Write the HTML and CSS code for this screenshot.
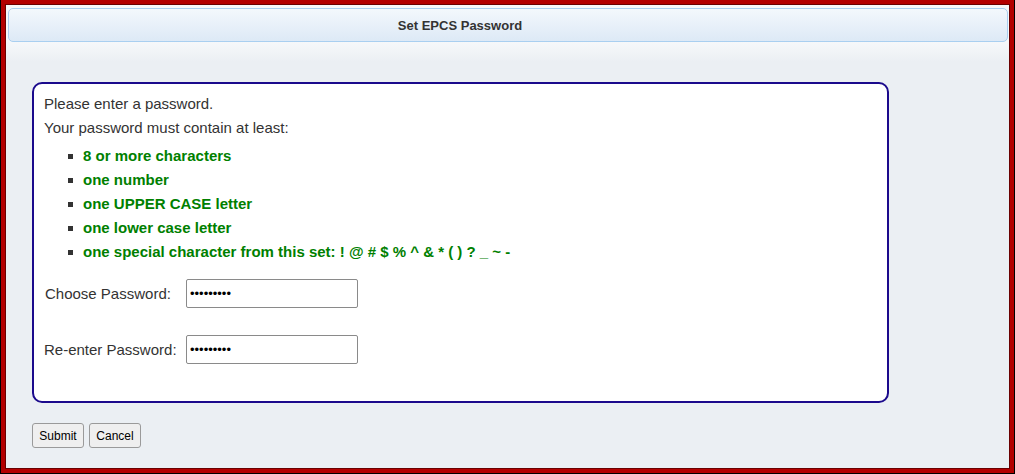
FILE: index.html
```html
<!DOCTYPE html>
<html lang="en">
<head>
    <meta charset="UTF-8">
    <meta name="viewport" content="width=device-width, initial-scale=1.0">
    <title>Set EPCS Password</title>
    <link rel="stylesheet" href="styles.css">
</head>
<body>
    <div class="page">
        <div class="frame">
            <div class="header">
                <span class="title">Set EPCS Password</span>
            </div>
            <form class="password-form" onsubmit="return false;">
                <div class="panel">
                    <div class="intro">Please enter a password.</div>
                    <div class="intro">Your password must contain at least:</div>
                    <ul class="rules">
                        <li>8 or more characters</li>
                        <li>one number</li>
                        <li>one UPPER CASE letter</li>
                        <li>one lower case letter</li>
                        <li>one special character from this set: ! @ # $ % ^ &amp; * ( ) ? _ ~ -</li>
                    </ul>
                    <div class="field-row">
                        <label for="pwd1">Choose Password:</label>
                        <input type="password" id="pwd1" name="pwd1" value="secret123">
                    </div>
                    <div class="field-row">
                        <label class="label-tight" for="pwd2">Re-enter Password:</label>
                        <input type="password" id="pwd2" name="pwd2" value="secret123">
                    </div>
                </div>
                <div class="actions">
                    <button type="submit">Submit</button>
                    <button type="button">Cancel</button>
                </div>
            </form>
        </div>
    </div>
</body>
</html>
```

FILE: styles.css
```css
* {
    box-sizing: border-box;
}
body {
    margin: 0;
    font-family: "Liberation Sans", Arial, sans-serif;
    color: #333;
    background-color: #fff;
}
.page {
    width: 1015px;
    height: 474px;
    border: 1px solid #000;
    border-top: none;
}
.frame {
    height: 100%;
    border: 4px solid #b30000;
    box-shadow: inset 1px 1px 0 #6a0000, inset -1px -1px 0 #6a0000;
    padding: 4px 2px 0 3px;
    background: linear-gradient(to bottom, #f6f8fa 0, #f6f8fa 38px, #ebeff3 58px, #ebeff3 100%);
}
.header {
    height: 34px;
    border: 1px solid #a9cff0;
    border-radius: 5px;
    background: linear-gradient(to bottom, #f3f8fc 0%, #dde9f6 100%);
    display: flex;
    align-items: center;
    justify-content: center;
    padding-right: 96px;
}
.title {
    font-size: 13px;
    font-weight: bold;
    color: #333;
}
.password-form {
    padding: 40px 0 0 24px;
}
.panel {
    width: 857px;
    border: 2px solid #1b0a8c;
    border-radius: 10px;
    background-color: #fff;
    padding: 8px 10px 37px 10px;
    font-size: 15px;
    line-height: 24px;
}
.rules {
    list-style: none;
    margin: 4px 0 0 0;
    padding: 0 0 0 24px;
    color: #008000;
    font-weight: bold;
}
.rules li {
    display: flex;
    align-items: center;
}
.rules li::before {
    content: "";
    width: 5px;
    height: 5px;
    background-color: #333;
    margin-right: 10px;
    flex-shrink: 0;
}
.field-row {
    display: flex;
    align-items: center;
    margin-top: 15px;
}
.field-row + .field-row {
    margin-top: 27px;
}
.field-row label {
    width: 142px;
    padding-left: 1px;
}
.field-row .label-tight {
    padding-left: 0;
}
.field-row input {
    width: 172px;
    height: 29px;
    border: 1px solid #8a8a8a;
    border-radius: 2px;
    padding: 0 3px;
    font-family: "Liberation Sans", Arial, sans-serif;
    font-size: 13px;
    color: #000;
    background-color: #fff;
}
.actions {
    display: flex;
    gap: 5px;
    margin-top: 20px;
}
.actions button {
    height: 25px;
    width: 52px;
    padding: 0;
    font-family: "Liberation Sans", Arial, sans-serif;
    font-size: 12px;
    color: #000;
    background-color: #efefef;
    border: 1px solid #9a9a9a;
    border-radius: 3px;
    cursor: pointer;
}
.actions button:hover {
    background-color: #e3e3e3;
}
```
